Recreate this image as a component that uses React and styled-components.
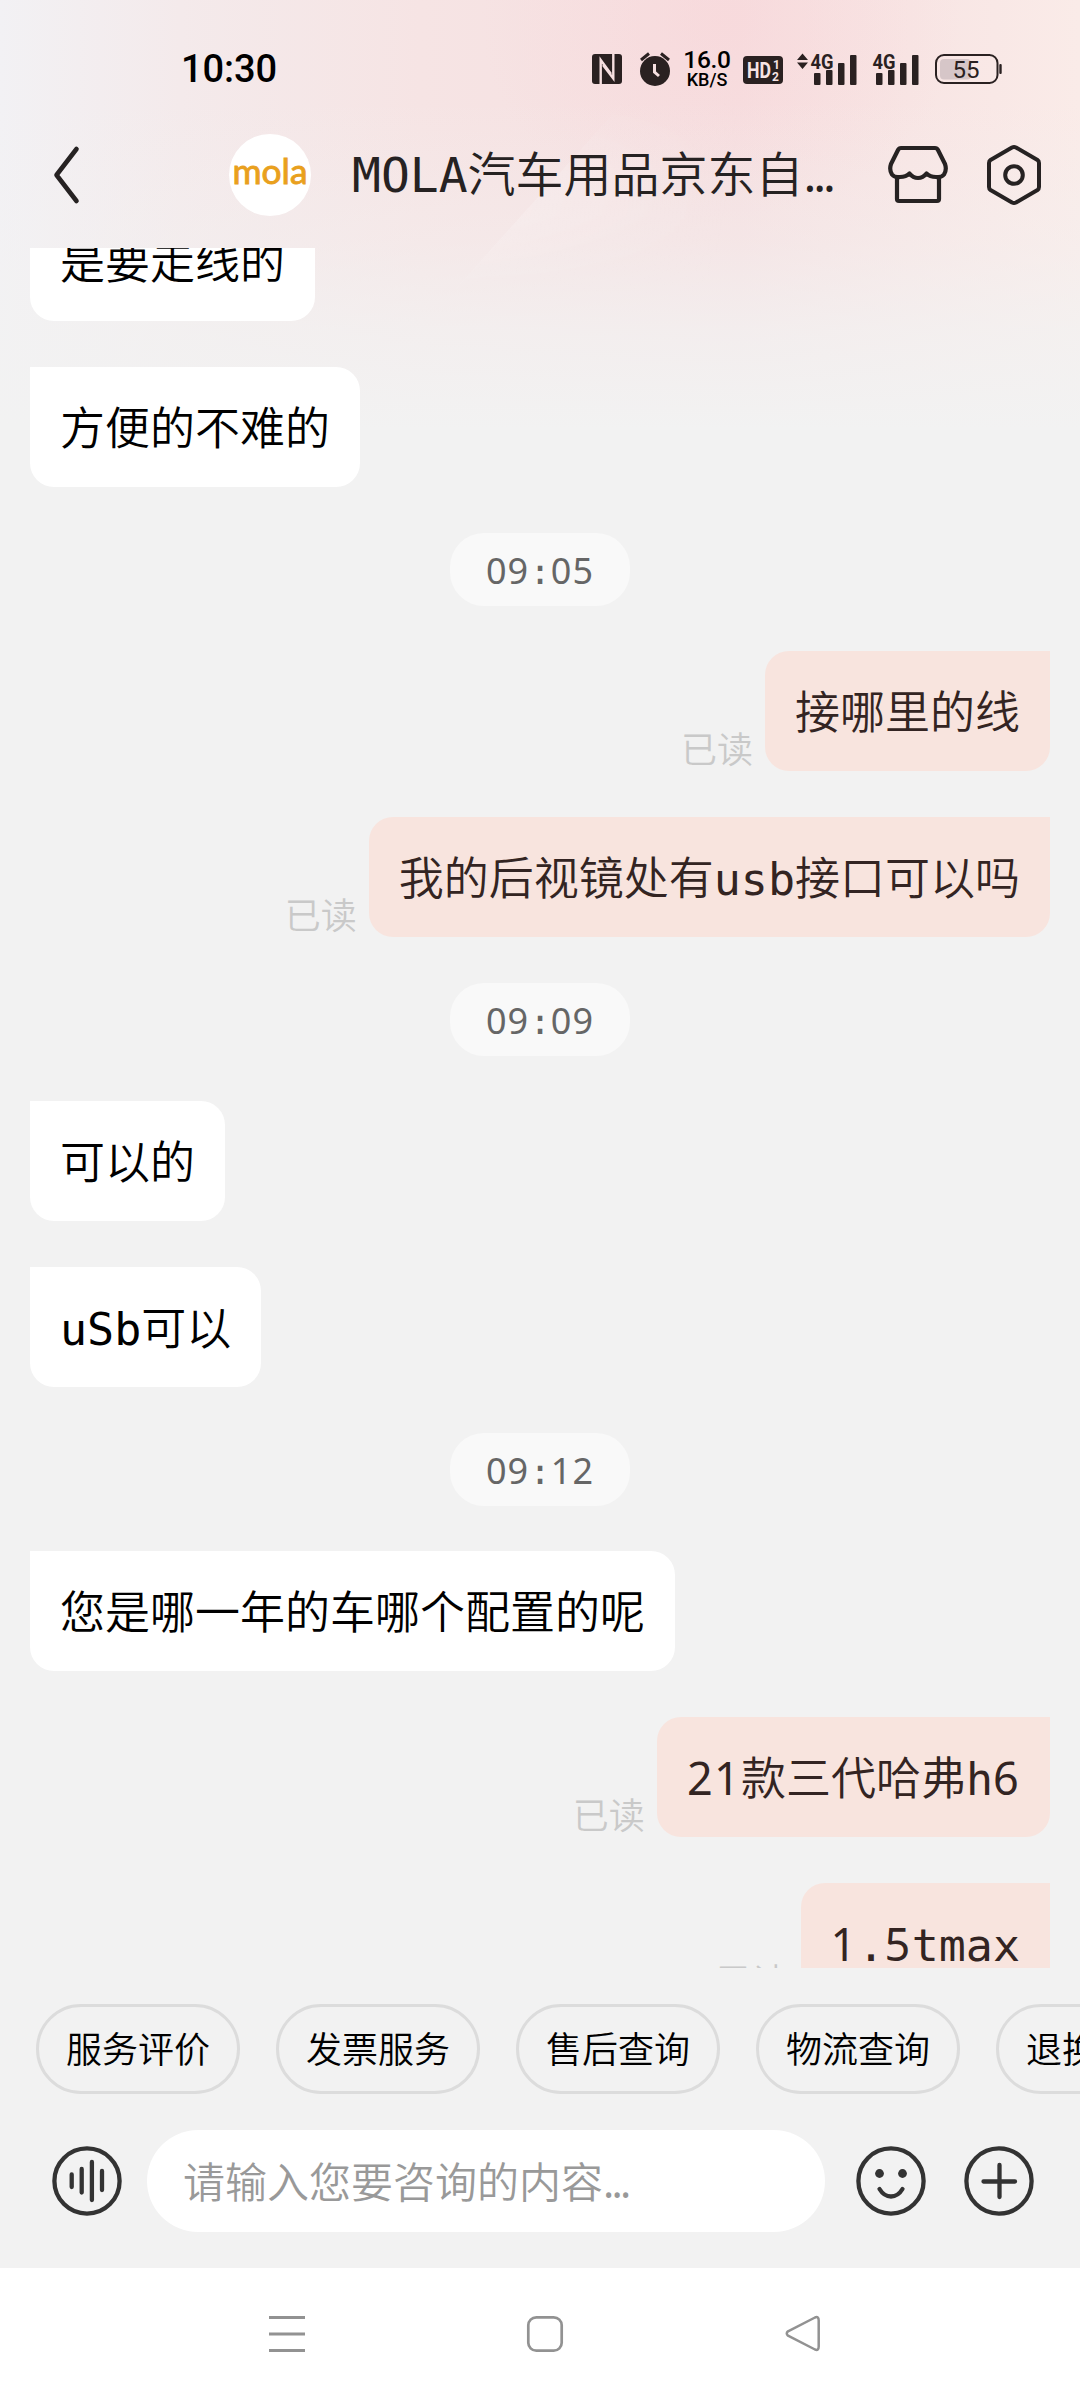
import React from 'react';
import styled, { createGlobalStyle } from 'styled-components';

const messages = [
  { type: 'shop', text: '是要走线的' },
  { type: 'shop', text: '方便的不难的' },
  { type: 'time', text: '09:05' },
  { type: 'me', text: '接哪里的线' },
  { type: 'me', text: '我的后视镜处有usb接口可以吗' },
  { type: 'time', text: '09:09' },
  { type: 'shop', text: '可以的' },
  { type: 'shop', text: 'uSb可以' },
  { type: 'time', text: '09:12' },
  { type: 'shop', text: '您是哪一年的车哪个配置的呢' },
  { type: 'me', text: '21款三代哈弗h6' },
  { type: 'me', text: '1.5tmax' },
];

const quickActions = ['服务评价', '发票服务', '售后查询', '物流查询', '退换服务'];

// digits get their own font, the mono one has a dotted zero
const MixedText = ({ text }) => (
  <>
    {text.split(/([0-9]+)/).map((part, i) =>
      /[0-9]/.test(part) ? <Digits key={i}>{part}</Digits> : part
    )}
  </>
);

const Signal = ({ arrows }) => (
  <svg width={arrows ? 61 : 48} height="36" viewBox={`${arrows ? -17 : -4} 50 ${arrows ? 61 : 48} 36`} fill="#2a2121">
    {arrows && <path d="M-17 59 L-11.5 52.5 L-6 59Z M-17 61.5 L-11.5 68 L-6 61.5Z" />}
    <text x="-3.5" y="67.5" fontFamily="Roboto, sans-serif" fontSize="21" fontWeight="700" textLength="23" lengthAdjust="spacingAndGlyphs">4G</text>
    <rect x="0" y="72" width="6.5" height="12" rx="1" />
    <rect x="12" y="69" width="6.5" height="15" rx="1" />
    <rect x="24" y="62" width="6.5" height="22" rx="1" />
    <rect x="36" y="54" width="6.5" height="30" rx="1" />
  </svg>
);

const App = () => {
  return (
    <Screen>
      <GlobalStyle />
      <StatusBar>
        <Clock>10:30</Clock>
        <StatusIcons>
          <svg width="30" height="30" viewBox="0 0 30 30" fill="none">
            <rect width="30" height="30" rx="3" fill="#2a2121" />
            <path d="M8.7 30 V6 L19 20 M21.3 0 V24.5 L11 11" stroke="#f6dfe0" strokeWidth="2.4" />
          </svg>
          <AlarmIcon width="34" height="36" viewBox="637 51 34 36" fill="none">
            <circle cx="654" cy="71" r="15" fill="#2a2121" />
            <path d="M640 60 L648 53.5 M668 60 L660 53.5" stroke="#2a2121" strokeWidth="3" />
            <path d="M653.5 64 V72 L658 76" stroke="#f6dfe0" strokeWidth="3" />
          </AlarmIcon>
          <Speed>
            <SpeedValue>16.0</SpeedValue>
            <SpeedUnit>KB/S</SpeedUnit>
          </Speed>
          <HdIcon width="40" height="28" viewBox="0 0 40 28">
            <rect width="40" height="28" rx="4" fill="#2a2121" />
            <g fill="#f6e4e4" fontFamily="Roboto, sans-serif" fontWeight="700">
              <text x="4" y="22" fontSize="22" textLength="24" lengthAdjust="spacingAndGlyphs">HD</text>
              <text x="30" y="12.5" fontSize="12">1</text>
              <text x="29" y="25" fontSize="12">2</text>
            </g>
          </HdIcon>
          <SignalSlot $left={14}><Signal arrows /></SignalSlot>
          <SignalSlot $left={14}><Signal /></SignalSlot>
          <BatteryIcon width="68" height="32" viewBox="934 52 68 32" fill="none">
            <rect x="936" y="54" width="61.5" height="28" rx="8" stroke="#2a2121" strokeWidth="2" />
            <rect x="940" y="58" width="31" height="20.5" rx="4" fill="#d6c6c8" />
            <rect x="999.3" y="63" width="2.4" height="10" rx="1" fill="#2a2121" />
            <text x="952.5" y="77" fontFamily="Roboto, sans-serif" fontSize="24" fill="#2a2121" textLength="27">55</text>
          </BatteryIcon>
        </StatusIcons>
      </StatusBar>

      <Header>
        <BackIcon width="30" height="60" viewBox="51 145 30 60" fill="none">
          <path d="M76.5 149 L56.5 175 L76.5 201" stroke="#262222" strokeWidth="4.6" strokeLinecap="round" strokeLinejoin="round" />
        </BackIcon>
        <Avatar>
          <svg width="82" height="82" viewBox="0 0 82 82">
            <text x="3.5" y="50" fill="#e9a01d" stroke="#e9a01d" strokeWidth="0.9" fontFamily="Lato, sans-serif" fontWeight="400" fontSize="34" textLength="75" lengthAdjust="spacingAndGlyphs">mola</text>
          </svg>
        </Avatar>
        <Title>MOLA汽车用品京东自<Dots>...</Dots></Title>
        <svg width="60" height="60" viewBox="888 145 60 60" fill="none" stroke="#262222" strokeWidth="4.2" strokeLinejoin="round">
          <path d="M901 148 H935 Q937 148 938 150 L945 164 Q947 170 944 174.5 Q941 178 936 177 Q930 177 926.5 173.5 Q923 178 918 178 Q913 178 909.5 173.5 Q906 177 900 177 Q895 178 892 174.5 Q889 170 891 164 L898 150 Q899 148 901 148Z" />
          <path d="M897 178 V199 Q897 201 899 201 H937 Q939 201 939 199 V178" />
        </svg>
        <SettingIcon width="60" height="64" viewBox="984 143 60 64" fill="none" stroke="#262222" strokeLinejoin="round">
          <path d="M1012 147.5 Q1014 146.5 1016 147.5 L1037.5 160 Q1039 161 1039 163 V187 Q1039 189 1037.5 190 L1016 202.5 Q1014 203.5 1012 202.5 L990.5 190 Q989 189 989 187 V163 Q989 161 990.5 160Z" strokeWidth="4" />
          <circle cx="1014" cy="175" r="8.8" strokeWidth="4" />
        </SettingIcon>
      </Header>

      <ChatList>
        {messages.map((msg, i) => {
          if (msg.type === 'time') {
            return <TimePill key={i}><MixedText text={msg.text} /></TimePill>;
          }
          const mine = msg.type === 'me';
          return (
            <MessageRow key={i} $mine={mine}>
              {mine && <ReadMark>已读</ReadMark>}
              <Bubble $mine={mine}><MixedText text={msg.text} /></Bubble>
            </MessageRow>
          );
        })}
      </ChatList>

      <QuickBar>
        {quickActions.map((name) => (
          <QuickButton key={name}>{name}</QuickButton>
        ))}
      </QuickBar>

      <InputBar>
        <svg width="72" height="72" viewBox="51 2145 72 72" fill="none" stroke="#333" strokeWidth="4.3" strokeLinecap="round">
          <circle cx="87" cy="2181" r="32.6" />
          <path d="M71.7 2174.5 V2187 M81.7 2169 V2192.5 M91.9 2162 V2200 M102 2171 V2190" />
        </svg>
        <MessageInput>请输入您要咨询的内容<Dots>...</Dots></MessageInput>
        <ToolIcons>
          <svg width="72" height="72" viewBox="855 2145 72 72" fill="none" stroke="#333" strokeWidth="4.3" strokeLinecap="round">
            <circle cx="891" cy="2181" r="32.6" />
            <circle cx="879.5" cy="2173.5" r="4.4" fill="#333" stroke="none" />
            <circle cx="902.5" cy="2173.5" r="4.4" fill="#333" stroke="none" />
            <path d="M879.5 2189 Q884 2196.5 891 2196.5 Q898 2196.5 902.5 2189" />
          </svg>
          <svg width="72" height="72" viewBox="963 2145 72 72" fill="none" stroke="#333" strokeWidth="4.3" strokeLinecap="round">
            <circle cx="999" cy="2181" r="32.6" />
            <path d="M983.5 2181.5 H1015 M999.5 2165 V2197" />
          </svg>
        </ToolIcons>
      </InputBar>

      <NavBar>
        <svg width="40" height="40" viewBox="267 2314 40 40" stroke="#929292" strokeWidth="3">
          <path d="M269 2317.5 H305 M269 2334 H305 M269 2350.5 H305" />
        </svg>
        <svg width="40" height="40" viewBox="525 2314 40 40" fill="none" stroke="#929292" strokeWidth="2.7">
          <rect x="528.3" y="2317.3" width="33.4" height="33.4" rx="8" />
        </svg>
        <svg width="40" height="40" viewBox="782 2314 40 40" fill="none" stroke="#929292" strokeWidth="2.5" strokeLinejoin="round">
          <path d="M815 2317.5 Q818.7 2316 818.7 2320.5 V2346.5 Q818.7 2351 815 2349.5 L788 2335.7 Q785.5 2333.5 788 2331.3Z" />
        </svg>
      </NavBar>
    </Screen>
  );
};

export default App;

const GlobalStyle = createGlobalStyle`
  * { box-sizing: border-box; }
  body { margin: 0; background: #f1f1f1; }
  svg { display: block; flex-shrink: 0; }
`;

const Screen = styled.div`
  width: 1080px;
  height: 2400px;
  overflow: hidden;
  position: relative;
  z-index: 0;
  display: flex;
  flex-direction: column;
  background:
    linear-gradient(to bottom, rgba(242, 242, 242, 0) 100px, rgba(242, 242, 242, 0.35) 240px, rgba(242, 242, 242, 0.75) 330px, #f2f2f2 430px),
    radial-gradient(ellipse 240px 200px at 720px 20px, rgba(250, 208, 213, 0.35), rgba(250, 208, 213, 0)),
    linear-gradient(to right, #f2f1f4 0, #f4eaeb 180px, #f6e4e4 420px, #f6dfe0 740px, #faebe8 1080px);
  font-family: "Noto Sans CJK SC", sans-serif;

  /* soft light ray under the title */
  &::before {
    content: "";
    position: absolute;
    z-index: -1;
    left: 450px;
    top: 95px;
    width: 360px;
    height: 200px;
    clip-path: polygon(50% 0, 100% 0, 100% 100%, 0 100%);
    background: linear-gradient(100deg, rgba(255, 255, 255, 0.28), rgba(255, 255, 255, 0) 75%);
    mask-image: linear-gradient(to bottom, transparent, #000 40%, #000 60%, transparent);
  }
`;

const StatusBar = styled.div`
  height: 102px;
  padding: 36px 78px 0 181px;
  display: flex;
  justify-content: space-between;
  flex-shrink: 0;
`;

const Clock = styled.div`
  font-family: Roboto, sans-serif;
  font-size: 38px;
  font-weight: 470;
  line-height: 66px;
  letter-spacing: -0.1px;
  height: 66px;
`;

const StatusIcons = styled.div`
  display: flex;
  align-items: center;
  height: 66px;
`;

const AlarmIcon = styled.svg`
  margin-left: 16px;
`;

const Speed = styled.div`
  width: 46px;
  margin-left: 12px;
  display: flex;
  flex-direction: column;
  align-items: center;
  font-family: Roboto, sans-serif;
  font-weight: 500;
`;

const SpeedValue = styled.div`
  font-size: 24.5px;
  line-height: 20px;
  letter-spacing: -0.3px;
`;

const SpeedUnit = styled.div`
  font-size: 18px;
  line-height: 19px;
`;

const HdIcon = styled.svg`
  margin: 2px 0 0 13px;
`;

const SignalSlot = styled.div`
  margin-left: ${(props) => props.$left}px;
`;

const BatteryIcon = styled.svg`
  margin-left: 14px;
`;

const Header = styled.div`
  height: 146px;
  padding: 0 36px 0 51px;
  display: flex;
  align-items: center;
  flex-shrink: 0;
`;

const BackIcon = styled.svg`
  margin-right: 148px;
`;

const Avatar = styled.div`
  width: 82px;
  height: 82px;
  border-radius: 50%;
  background: #fff;
  overflow: hidden;
`;

const Title = styled.div`
  width: 536px;
  margin-left: 41px;
  font-family: "DejaVu Sans Mono", "Noto Sans CJK SC", monospace;
  font-size: 48px;
  font-weight: 350;
  line-height: 70px;
  color: #262222;
  white-space: nowrap;
`;

const Dots = styled.span`
  font-family: "Noto Sans", sans-serif;
  font-weight: 400;
  line-height: 1;
  letter-spacing: -0.065em;
`;

const SettingIcon = styled.svg`
  margin-left: 36px;
`;

const ChatList = styled.div`
  height: 1720px;
  padding: 0 30px;
  margin-bottom: 36px;
  overflow: hidden;
  display: flex;
  flex-direction: column;
  flex-shrink: 0;
  font-family: "DejaVu Sans Mono", "Noto Sans CJK SC", monospace;
  font-weight: 350;

  /* scrolled, the first message is cut by the header */
  & > :first-child {
    margin-top: -47px;
  }
`;

const MessageRow = styled.div`
  display: flex;
  align-items: flex-end;
  justify-content: ${(props) => (props.$mine ? 'flex-end' : 'flex-start')};
  flex-shrink: 0;
  margin-bottom: 46px;
`;

const Bubble = styled.div`
  height: 120px;
  padding: 0 30px;
  border-radius: ${(props) => (props.$mine ? '24px 0 24px 24px' : '0 24px 24px 24px')};
  background: ${(props) => (props.$mine ? '#f8e4de' : '#fff')};
  color: ${(props) => (props.$mine ? '#332422' : '#000')};
  font-size: 45px;
  line-height: 125px;
  white-space: nowrap;
`;

const ReadMark = styled.div`
  margin: 0 12px 3px 0;
  font-family: "Noto Sans CJK SC", sans-serif;
  font-size: 36px;
  font-weight: 350;
  line-height: 42px;
  color: #c9c9c9;
`;

const TimePill = styled.div`
  align-self: center;
  flex-shrink: 0;
  height: 73px;
  margin-bottom: 45px;
  padding: 0 36px;
  border-radius: 34px;
  background: #f9f9f9;
  color: #666;
  font-size: 36px;
  line-height: 78px;
`;

const Digits = styled.span`
  font-family: "Noto Sans", sans-serif;
  font-weight: 400;
  line-height: 1;
  letter-spacing: 0.028em;
`;

const QuickBar = styled.div`
  display: flex;
  gap: 36px;
  padding-left: 36px;
  margin-bottom: 36px;
  flex-shrink: 0;
`;

const QuickButton = styled.button`
  width: 204px;
  height: 90px;
  padding: 0 0 3px;
  flex-shrink: 0;
  border: 3px solid #dcdcdc;
  border-radius: 45px;
  background: transparent;
  color: #000;
  font-family: "Noto Sans CJK SC", sans-serif;
  font-size: 36px;
  font-weight: 350;
  line-height: 81px;
`;

const InputBar = styled.div`
  height: 102px;
  margin-bottom: 36px;
  padding: 0 45px 0 51px;
  display: flex;
  align-items: center;
  flex-shrink: 0;
`;

const MessageInput = styled.div`
  width: 678px;
  height: 102px;
  margin-left: 24px;
  padding-left: 36px;
  border-radius: 51px;
  background: #fff;
  color: #999;
  font-size: 42px;
  font-weight: 350;
  line-height: 100px;
`;

const ToolIcons = styled.div`
  display: flex;
  gap: 36px;
  margin-left: 30px;
`;

const NavBar = styled.div`
  height: 132px;
  padding: 0 258px 0 267px;
  display: flex;
  align-items: center;
  justify-content: space-between;
  flex-shrink: 0;
  background: #fff;
`;
